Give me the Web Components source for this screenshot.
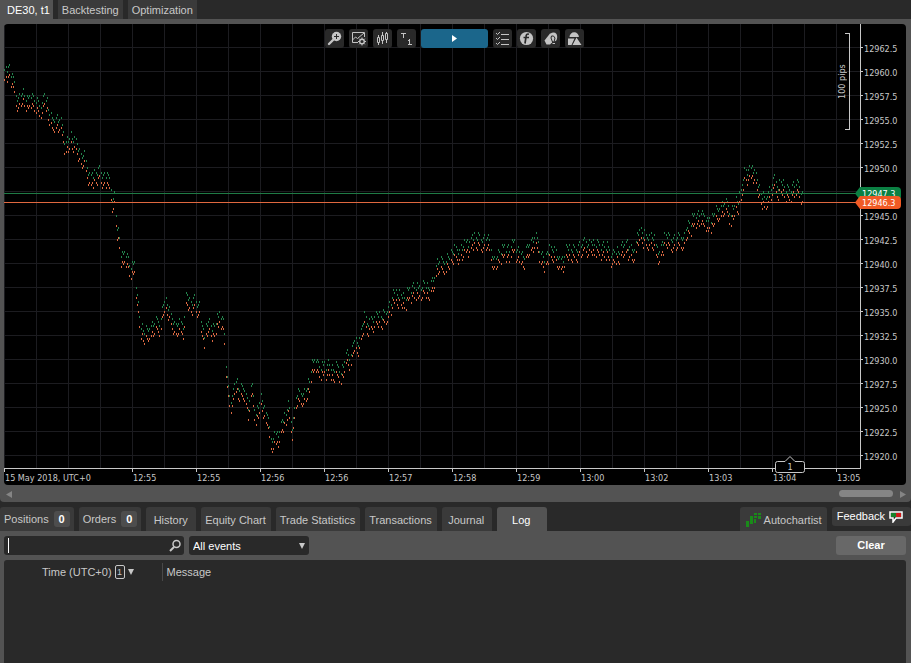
<!DOCTYPE html>
<html lang="en">
<head>
<meta charset="utf-8">
<title>DE30, t1</title>
<style>
	html, body { margin: 0; min-height: 100%; background: #292929; }
	body { font: 11px/13px "Liberation Sans", Arial, sans-serif; color: #c8c8c8; }
</style>
</head>
<body>
<trading-app></trading-app>
<script>
const reset = `
	* { box-sizing: border-box; }
	button, input, select { font: inherit; color: inherit; margin: 0; padding: 0; border: 0; background: none; }
	svg { display: block; }
`;

// one tab, used in the window bar and in the bottom bar
class TabItem extends HTMLElement {
	constructor() {
		super();
		this.attachShadow({ mode: "open" });
		this.shadowRoot.innerHTML = `
			<style>
				${reset}
				:host { display: flex; flex: none; }
				button {
					display: flex;
					align-items: center;
					justify-content: center;
					padding: 2px 5px 0 4px;
					height: 24px;
					min-width: 50px;
					background: #3a3a3a;
					border-radius: 3px 3px 0 0;
					white-space: nowrap;
				}
				:host([top]) button { height: 19px; border-radius: 0; padding: 2px 4px 0; }
				:host([first]) button { padding: 2px 3px 0 7px; }
				:host([count]) button { padding: 0 4px; gap: 5px; }
				:host([active]) button { background: #535353; color: #fff; }
				b {
					display: none;
					width: 16px;
					height: 16px;
					line-height: 17px;
					border-radius: 3px;
					background: #4d4d4d;
					color: #fff;
				}
				:host([count]) b { display: block; }
			</style>
			<button type="button"><slot></slot><b></b></button>
		`;
	}
	connectedCallback() {
		this.shadowRoot.querySelector("b").textContent = this.getAttribute("count") || "";
	}
}
customElements.define("tab-item", TabItem);

class IconButton extends HTMLElement {
	constructor() {
		super();
		this.attachShadow({ mode: "open" });
		this.shadowRoot.innerHTML = `
			<style>
				${reset}
				:host { display: block; }
				button {
					display: grid;
					place-items: center;
					width: 19px;
					height: 19px;
					border-radius: 3px;
					background: #292929;
					color: #c4c4c4;
				}
				:host([primary]) button { width: 67px; background: #1b668b; color: #fff; }
			</style>
			<button type="button"><slot></slot></button>
		`;
	}
	connectedCallback() {
		this.shadowRoot.querySelector("button").setAttribute("aria-label", this.getAttribute("label"));
	}
}
customElements.define("icon-button", IconButton);

class ChartToolbar extends HTMLElement {
	constructor() {
		super();
		this.attachShadow({ mode: "open" });
		this.shadowRoot.innerHTML = `
			<style>
				:host { display: flex; gap: 5px; }
				svg { display: block; width: 19px; height: 19px; fill: none; stroke: currentColor; }
			</style>
			<icon-button label="Zoom in"><svg viewBox="0 0 19 19">
				<circle cx="11.5" cy="7.5" r="4.7" fill="currentColor" stroke="none"/>
				<path d="M8 11l-4 4" stroke-width="2.4" stroke-linecap="round"/>
				<path d="M9 7.5h5M11.5 5v5" stroke="#292929"/>
			</svg></icon-button>
			<icon-button label="Chart settings"><svg viewBox="0 0 19 19">
				<path d="M9 13.5H3.5v-10h12V8M3.5 11l3-3 2 1.5L15 4"/>
				<circle cx="13" cy="12.5" r="2.3" stroke-width="1.4"/>
				<path d="M13 8.5v1.5M13 15v1.5M9 12.5h1.5M15.5 12.5H17M10.2 9.7l1 1M14.8 14.3l1 1M15.8 9.7l-1 1M11.2 14.3l-1 1"/>
			</svg></icon-button>
			<icon-button label="Candles"><svg viewBox="0 0 19 19">
				<path d="M4.5 8.5h2v5h-2zM8.5 6.5h2v5h-2zM12.5 4.5h2v6h-2zM5.5 6v2M5.5 14v2M9.5 3v3M9.5 12v3M13.5 3v1M13.5 11v3"/>
			</svg></icon-button>
			<icon-button label="Tick period"><svg viewBox="0 0 19 19" shape-rendering="crispEdges">
				<path d="M4 4.5h5M6.5 4v5M11 11.5h2M12.5 10v6M11 15.5h4"/>
			</svg></icon-button>
			<icon-button primary label="Play"><svg viewBox="0 0 19 19">
				<path d="M7 6l5 3.5L7 13z" fill="currentColor" stroke="none"/>
			</svg></icon-button>
			<icon-button label="Check list"><svg viewBox="0 0 19 19">
				<path d="M8 5.5h8M8 10.5h8M8 15.5h8M3 4l1.5 1.5L7 3M3 9l1.5 1.5L7 8M3 14l1.5 1.5L7 13"/>
			</svg></icon-button>
			<icon-button label="Indicators"><svg viewBox="0 0 19 19">
				<circle cx="9.5" cy="9.5" r="6.6" fill="currentColor" stroke="none"/>
				<path d="M12 5.2c-2-.6-2.7.3-2.9 2L8 14.5M6.5 8.5H12" stroke="#292929" stroke-width="1.7"/>
			</svg></icon-button>
			<icon-button label="Drawings"><svg viewBox="0 0 19 19">
				<path d="M3.5 11.5L9 4.5l4 0-2 9-2 2H5.5z" fill="currentColor" stroke="none"/>
				<ellipse cx="12.5" cy="8" rx="3.7" ry="4.5" fill="currentColor" stroke="none"/>
				<path d="M11.5 13l-1.5-4 .5-2h2l1.5 2-1 4" stroke="#292929"/>
				<path d="M11.5 14.5h2.5"/>
			</svg></icon-button>
			<icon-button label="Shapes"><svg viewBox="0 0 19 19">
				<g fill="currentColor" stroke="none">
					<path d="M4.5 8a4.7 4.7 0 0 1 9.4 0zM3 9.5h6.5L6.5 16H3zM11.5 8.5l5 7.5h-9z"/>
				</g>
			</svg></icon-button>
		`;
	}
}
customElements.define("chart-toolbar", ChartToolbar);

// ask price track as x, y pairs; the bid runs a fixed spread below it
const TRACK = [
	4,69, 6,64, 10,72, 12,75, 14,83, 16,95, 20,97, 23,91, 27,99, 31,93, 35,99, 39,106, 43,99, 45,94, 48,107, 52,117,
	57,118, 61,122, 64,138, 68,141, 71,135, 74,139, 77,141, 80,155, 84,157, 88,171, 92,175, 96,171, 100,168, 104,177,
	107,173, 110,184, 112,197, 114,195, 116,215, 117,227, 119,236, 120,250, 122,255, 125,251, 128,256, 130,270,
	134,263, 136,282, 138,305, 139,316, 141,326, 145,330, 150,326, 155,322, 160,322, 163,305, 166,299, 170,312,
	175,325, 183,324, 186,294, 190,302, 194,298, 199,305, 201,318, 204,340, 206,325, 208,318, 212,328, 216,320,
	219,310, 223,320, 225,342, 226,366, 227,382, 229,395, 231,399, 233,390, 235,377, 238,387, 245,387, 248,407,
	252,386, 255,415, 258,405, 261,395, 263,403, 265,412, 268,413, 270,443, 275,435, 280,428, 284,415, 288,404,
	291,419, 292,424, 296,396, 302,392, 307,387, 309,378, 312,363, 316,356, 320,368, 324,365, 328,363, 333,368,
	337,364, 341,371, 344,362, 347,356, 351,353, 354,340, 359,340, 364,313, 368,325, 374,315, 380,315, 386,310,
	391,300, 396,290, 402,296, 408,290, 413,285, 418,290, 424,283, 427,286, 431,284, 434,276, 437,262, 444,260,
	450,255, 453,247, 460,249, 465,244, 470,240, 475,234, 482,237, 488,239, 492,252, 495,264, 499,249, 503,245,
	509,249, 514,243, 519,252, 524,254, 530,241, 536,237, 540,250, 545,262, 548,247, 554,247, 559,261, 562,260,
	566,248, 575,247, 585,243, 596,242, 605,245, 611,253, 620,248, 625,242, 632,252, 636,240, 639,228, 645,235,
	652,234, 656,247, 660,250, 665,232, 672,238, 684,236, 688,224, 692,215, 700,214, 706,217, 710,223, 714,211,
	720,206, 726,203, 731,211, 737,198, 741,190, 744,167, 747,172, 752,166, 756,175, 759,188, 764,197, 770,188,
	774,181, 778,184, 781,180, 786,188, 795,184, 800,187, 803,194
];
const JITTER = [0, 1, 2, 0, -1, 1, 0, -2, -1, 0, 2, 1, -1, 0, 1, -1, 1, 2, -1];

function tickPath(shift) {
	let d = "";
	let i = 0;
	let last = 0;
	for (let x = 4, n = 0; x < 803; x += n % 4 ? 1 : 2, n++) {
		while (TRACK[i + 2] <= x) i += 2;
		const [x1, y1, x2, y2] = TRACK.slice(i, i + 4);
		const y = y1 + (y2 - y1) * (x - x1) / (x2 - x1);
		let step = Math.round(y / 2.4) + JITTER[n % JITTER.length];
		// neighbouring ticks never share a price
		if (step === last) step += n % 2 ? 1 : -1;
		last = step;
		// track is in window coordinates, the plot starts at 4,24
		d += `M${x - 3.5} ${Math.round(step * 2.4) - 25 + shift}v2`;
	}
	return d;
}

class TickChart extends HTMLElement {
	constructor() {
		super();
		this.attachShadow({ mode: "open" });
		const prices = [];
		for (let p = 12962.5; p >= 12920; p -= 2.5) prices.push(p.toFixed(1));
		const times = ["12:55", "12:55", "12:56", "12:56", "12:57", "12:58", "12:59", "13:00", "13:02", "13:03", "13:04", "13:05"];
		this.shadowRoot.innerHTML = `
			<style>
				${reset}
				:host {
					display: grid;
					grid-template-columns: 1fr 46px;
					position: relative;
					background: #000;
					border-radius: 4px;
					overflow: hidden;
					font: 9px/12px "DejaVu Sans Condensed", "DejaVu Sans", sans-serif;
				}
				.plot { position: relative; overflow: hidden; min-width: 0; }
				.plot svg { width: 100%; height: 100%; position: absolute; }
				.prices { border-left: 1px solid #c8c8c8; padding-top: 13px; }
				.prices div { height: 24px; line-height: 24px; padding-left: 3px; position: relative; }
				.prices div::before { content: ""; position: absolute; left: 0; top: 10px; width: 2px; height: 1px; background: #c8c8c8; }
				.times { grid-column: 1 / 3; display: flex; height: 17px; overflow: hidden; }
				.times span { flex: none; width: 64px; padding: 3px 0 0 1px; white-space: nowrap; position: relative; }
				.times span:first-child { width: 128px; }
				.times span::before { content: ""; position: absolute; left: 0; top: 0; width: 1px; height: 3px; background: #c8c8c8; }
				chart-toolbar { position: absolute; top: 5px; left: 0; right: 1px; justify-content: center; }
				.scale {
					position: absolute;
					top: 9px;
					right: 10px;
					width: 14px;
					height: 97px;
					display: flex;
					justify-content: space-between;
				}
				.scale span { writing-mode: vertical-rl; transform: rotate(180deg); text-align: center; line-height: 12px; }
				.scale i { flex: none; width: 5px; border: 1px solid #c8c8c8; border-left: 0; margin-left: -3px; }
				.tag {
					position: absolute;
					right: 5px;
					width: 46px;
					height: 13px;
					padding-left: 7px;
					line-height: 14px;
					color: #fff;
					border-radius: 0 4px 4px 0;
					clip-path: polygon(0 50%, 5px 0, 100% 0, 100% 100%, 5px 100%);
				}
				.ask { top: 163px; background: #0b8043; }
				.bid { top: 172px; background: #f15a24; }
				.mark { position: absolute; top: 431px; left: 770px; width: 32px; height: 18px; }
				.mark svg { position: absolute; }
				.mark span { position: relative; display: block; text-align: center; padding-top: 6px; }
			</style>
			<div class="plot">
				<svg shape-rendering="crispEdges" fill="none">
					<defs>
						<pattern id="grid" width="32" height="24" patternUnits="userSpaceOnUse">
							<path d="M0 23.5h32M.5 0v24" stroke="#1c1c20"/>
						</pattern>
					</defs>
					<rect width="100%" height="100%" fill="url(#grid)"/>
					<path d="${tickPath(0)}" stroke="#23844d"/>
					<path d="${tickPath(10)}" stroke="#dc6a42"/>
					<rect y="169" width="100%" height="1" fill="#1f7a45"/>
					<rect y="178" width="100%" height="1" fill="#e0683f"/>
					<rect y="100%" width="100%" height="1" fill="#c8c8c8" style="transform: translateY(-1px)"/>
				</svg>
				<div class="scale"><span>100 pips</span><i></i></div>
			</div>
			<div class="prices">${prices.map((p) => `<div>${p === "12947.5" ? "" : p}</div>`).join("")}</div>
			<div class="times"><span>15 May 2018, UTC+0</span>${times.map((t) => `<span>${t}</span>`).join("")}</div>
			<div class="tag ask">12947.3</div>
			<div class="tag bid">12946.3</div>
			<div class="mark">
				<svg width="32" height="18" fill="#000" stroke="#c8c8c8"><path d="M3.5 6.5H11l5-5 5 5h7.5q2 0 2 2v7q0 2-2 2h-25q-2 0-2-2v-7q0-2 2-2z"/></svg>
				<span>1</span>
			</div>
			<chart-toolbar></chart-toolbar>
		`;
	}
}
customElements.define("tick-chart", TickChart);

class ScrollStrip extends HTMLElement {
	constructor() {
		super();
		this.attachShadow({ mode: "open" });
		this.shadowRoot.innerHTML = `
			<style>
				${reset}
				:host { display: flex; align-items: center; height: 17px; gap: 7px; padding: 0 0 0 2px; }
				button { width: 6px; height: 8px; }
				.track { flex: 1; }
				.thumb { width: 54px; height: 7px; margin-left: auto; border-radius: 4px; background: #858585; }
			</style>
			<button type="button" aria-label="Scroll left"><svg width="6" height="8"><path d="M6 1v7L0 4.5z" fill="#858585"/></svg></button>
			<div class="track"><div class="thumb"></div></div>
			<button type="button" aria-label="Scroll right"><svg width="6" height="8"><path d="M0 1v7l6-3.5z" fill="#858585"/></svg></button>
		`;
	}
}
customElements.define("scroll-strip", ScrollStrip);

class EventLog extends HTMLElement {
	constructor() {
		super();
		this.attachShadow({ mode: "open" });
		this.shadowRoot.innerHTML = `
			<style>
				${reset}
				:host { display: flex; flex-direction: column; gap: 5px; padding: 5px 5px 0 4px; background: #535353; }
				.filter { display: flex; gap: 5px; height: 19px; color: #fff; }
				.search, .events { position: relative; display: flex; background: #292929; border-radius: 3px; }
				.search { width: 180px; }
				.search input { flex: 1; min-width: 0; padding: 0 4px; outline: 0; border-radius: 3px; }
				.caret { position: absolute; left: 4px; top: 2px; width: 1px; height: 15px; background: #fff; }
				.search svg { margin: 3px 3px 0 0; }
				.events { width: 120px; }
				select { appearance: none; width: 100%; padding: 1px 4px 0; }
				.events svg { position: absolute; right: 4px; top: 7px; pointer-events: none; }
				.clear { width: 70px; margin-left: auto; border-radius: 3px; background: #686868; font-weight: bold; }
				.table { flex: 1; background: #292929; border-radius: 3px 3px 0 0; padding-top: 3px; }
				table { width: 100%; border-collapse: collapse; table-layout: fixed; }
				th { font-weight: normal; text-align: left; height: 18px; padding: 0 0 0 4px; }
				th:first-child { width: 158px; padding: 0 20px 0 38px; border-right: 1px solid #484848; }
				.sort { display: flex; align-items: center; gap: 3px; white-space: nowrap; }
				.order { border: 1px solid #c8c8c8; border-radius: 2px; width: 10px; height: 14px; font-size: 9px; line-height: 12px; text-align: center; }
			</style>
			<div class="filter">
				<label class="search">
					<input type="text" aria-label="Search events">
					<span class="caret"></span>
					<svg width="12" height="13" fill="none" stroke="#c8c8c8"><circle cx="7.5" cy="5" r="3.5" stroke-width="1.5"/><path d="M5 8l-4 4" stroke-width="2"/></svg>
				</label>
				<div class="events">
					<select aria-label="Event type"><option>All events</option></select>
					<svg width="6" height="6"><path d="M0 0h6L3 6z" fill="#c8c8c8"/></svg>
				</div>
				<button type="button" class="clear">Clear</button>
			</div>
			<div class="table">
				<table>
					<thead><tr>
						<th><button type="button" class="sort"><span>Time (UTC+0)</span><span class="order">1</span><svg width="6" height="6"><path d="M0 0h6L3 6z" fill="#c8c8c8"/></svg></button></th>
						<th>Message</th>
					</tr></thead>
					<tbody></tbody>
				</table>
			</div>
		`;
	}
}
customElements.define("event-log", EventLog);

class TradingApp extends HTMLElement {
	constructor() {
		super();
		this.attachShadow({ mode: "open" });
		this.shadowRoot.innerHTML = `
			<style>
				${reset}
				:host { display: flex; flex-direction: column; min-height: 100vh; background: #292929; }
				nav { display: flex; gap: 5px; }
				.panel { background: #535353; padding: 5px 5px 0 4px; border-radius: 0 0 4px 4px; margin-bottom: 5px; }
				tick-chart { grid-template-rows: 445px 16px; }
				event-log { flex: 1; }
				.right { margin-left: auto; }
				.right svg { margin: 0 2px 0 1px; }
				.feedback {
					display: flex;
					align-items: center;
					gap: 4px;
					height: 19px;
					padding: 0 8px 0 5px;
					border-radius: 3px;
					background: #3a3a3a;
					color: #fff;
				}
			</style>
			<nav>
				<tab-item top first active>DE30, t1</tab-item>
				<tab-item top>Backtesting</tab-item>
				<tab-item top>Optimization</tab-item>
			</nav>
			<div class="panel">
				<tick-chart></tick-chart>
				<scroll-strip></scroll-strip>
			</div>
			<nav>
				<tab-item count="0">Positions</tab-item>
				<tab-item count="0">Orders</tab-item>
				<tab-item>History</tab-item>
				<tab-item>Equity Chart</tab-item>
				<tab-item>Trade Statistics</tab-item>
				<tab-item>Transactions</tab-item>
				<tab-item>Journal</tab-item>
				<tab-item active>Log</tab-item>
				<tab-item class="right"><svg width="17" height="16" fill="#1a8a1a"><path d="M1 9h3v6H1zM5 4h3v8H5zM9 7h2v4H9zM9 1h3v2H9zM13 1h3v2h-3zM9 4h3v2H9zM13 4h3v3h-3z"/></svg>Autochartist</tab-item>
				<button type="button" class="feedback">Feedback
					<svg width="14" height="13"><path d="M1 2h12v6H7l-3 4V8H1z" fill="#292929" stroke="#fff" stroke-width="1.5"/><path d="M2 3h5v4H2z" fill="#16812a"/><path d="M7 3h5v4H7z" fill="#d01818"/></svg>
				</button>
			</nav>
			<event-log></event-log>
		`;
	}
}
customElements.define("trading-app", TradingApp);
</script>
</body>
</html>
